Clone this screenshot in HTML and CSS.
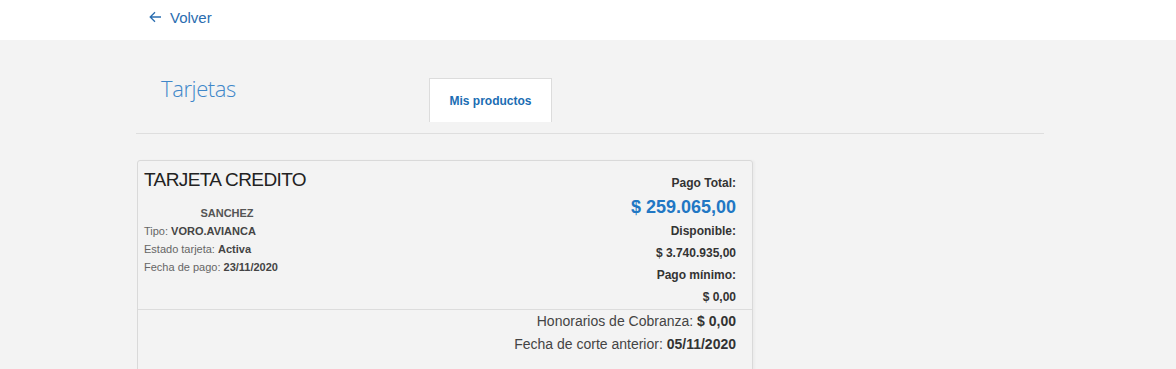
FILE: index.html
```html
<!DOCTYPE html>
<html>
<head>
  <title>Tarjetas</title>
  <link rel="stylesheet" href="styles.css">
</head>
<body>
  <div class="topbar">
    <a class="back" href="#">
      <svg class="back-icon" width="13" height="12" viewBox="0 0 13 12">
        <path d="M12 6H1.5M6 1.2L1.2 6L6 10.8" fill="none" stroke="#2a6db0" stroke-width="1.3"/>
      </svg>
      Volver
    </a>
  </div>

  <div class="page">
    <div class="header">
      <h1 class="title">Tarjetas</h1>
      <div class="tabs">
        <div class="tab active">Mis productos</div>
      </div>
    </div>

    <div class="card">
      <div class="card-main">
        <div class="card-left">
          <div class="card-name">TARJETA CREDITO</div>
          <div class="holder">SANCHEZ</div>
          <div class="info">Tipo: <b>VORO.AVIANCA</b></div>
          <div class="info">Estado tarjeta: <b>Activa</b></div>
          <div class="info">Fecha de pago: <b>23/11/2020</b></div>
        </div>
        <div class="card-right">
          <div class="label first">Pago Total:</div>
          <div class="total">$ 259.065,00</div>
          <div class="label">Disponible:</div>
          <div class="value">$ 3.740.935,00</div>
          <div class="label">Pago mínimo:</div>
          <div class="value">$ 0,00</div>
        </div>
      </div>
      <div class="card-footer">
        <div class="extra">Honorarios de Cobranza: <b>$ 0,00</b></div>
        <div class="extra">Fecha de corte anterior: <b>05/11/2020</b></div>
      </div>
    </div>
  </div>
</body>
</html>
```

FILE: styles.css
```css
body {
  margin: 0;
  padding: 0;
  background-color: #f3f3f3;
  font-family: "Liberation Sans", Arial, sans-serif;
  color: #333;
}

.topbar {
  background-color: #fff;
  height: 40px;
  box-sizing: border-box;
  padding-left: 149px;
  display: flex;
  align-items: center;
  padding-bottom: 6px;
}

.back {
  display: flex;
  align-items: center;
  gap: 8px;
  color: #2a6db0;
  font-size: 15px;
  text-decoration: none;
}

.back-icon {
  display: block;
}

.page {
  margin-left: 136px;
  width: 908px;
  padding-top: 34px;
}

.header {
  display: flex;
  align-items: flex-start;
  padding-bottom: 11px;
  border-bottom: 1px solid #dedede;
}

.title {
  flex: 0 0 293px;
  box-sizing: border-box;
  margin: 0;
  padding-left: 25px;
  font-family: "Open Sans", sans-serif;
  font-weight: 300;
  font-size: 22px;
  line-height: 28px;
  letter-spacing: -0.4px;
  color: #3f87c9;
}

.tabs {
  display: flex;
  margin-top: 4px;
}

.tab {
  width: 123px;
  height: 44px;
  box-sizing: border-box;
  display: flex;
  justify-content: center;
  align-items: center;
  font-size: 12px;
  font-weight: bold;
  color: #1b6db3;
}

.tab.active {
  background-color: #fff;
  border: 1px solid #dcdcdc;
  border-bottom: none;
}

.card {
  margin-top: 26px;
  margin-left: 1px;
  width: 616px;
  box-sizing: border-box;
  border: 1px solid #d9d9d9;
  border-radius: 3px;
  box-shadow: 2px 0 2px rgba(0, 0, 0, 0.03);
}

.card-main {
  display: flex;
  justify-content: space-between;
  padding: 8px 16px 1px 6px;
}

.card-left {
  width: 166px;
}

.card-name {
  font-size: 19px;
  line-height: 22px;
  letter-spacing: -0.6px;
  color: #222;
  white-space: nowrap;
}

.holder {
  margin-top: 13px;
  text-align: center;
  font-size: 11px;
  font-weight: bold;
  line-height: 18px;
  color: #555;
}

.info {
  font-size: 11px;
  line-height: 18px;
  color: #666;
  white-space: nowrap;
}

.info b {
  color: #444;
}

.card-right {
  margin-top: 3px;
  text-align: right;
}

.label {
  font-size: 12px;
  font-weight: bold;
  line-height: 22px;
  color: #333;
}

.total {
  font-size: 18px;
  font-weight: bold;
  line-height: 26px;
  color: #2177c4;
}

.value {
  font-size: 12px;
  font-weight: bold;
  line-height: 22px;
  color: #333;
}

.card-footer {
  border-top: 1px solid #dcdcdc;
  padding: 0 16px 20px 0;
  text-align: right;
}

.extra {
  font-size: 14px;
  line-height: 23px;
  color: #444;
}

.extra b {
  color: #333;
}
```
